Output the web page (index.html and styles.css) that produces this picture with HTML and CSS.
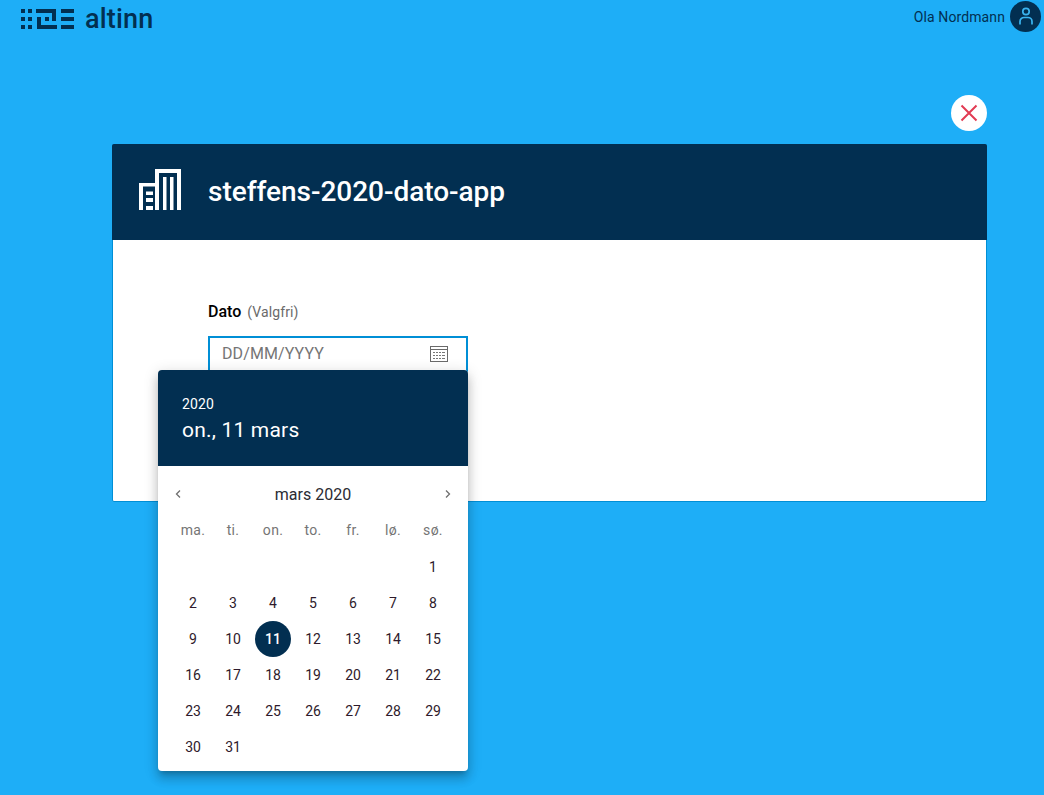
FILE: index.html
```html
<!DOCTYPE html>
<html lang="nb">
<head>
<meta charset="utf-8">
<title>steffens-2020-dato-app</title>
<link rel="stylesheet" href="styles.css">
</head>
<body>
<header class="topbar">
  <div class="brand">
    <svg class="brand-mark" width="53" height="20" viewBox="0 0 53 20" fill="#022f51" aria-hidden="true">
      <path d="M0 0h4v4H0zM7 0h4v4H7zM0 8h4v4H0zM7 8h4v4H7zM0 16h4v4H0zM7 16h4v4H7z"/>
      <path d="M15 0h20v12h-4V4H15z"/>
      <path d="M16 8h4v8h16v4H16z"/>
      <path d="M24 8h4v4h-4z"/>
      <path d="M40 0h13v4H40zM40 8h13v4H40zM40 16h13v4H40z"/>
    </svg>
    <span class="brand-name">altinn</span>
  </div>
  <div class="user">
    <span class="user-name">Ola Nordmann</span>
    <span class="avatar">
      <svg width="20" height="22" viewBox="0 0 20 22" fill="none" stroke="#3ab4f0" stroke-width="1.7" aria-hidden="true">
        <circle cx="10" cy="5.500" r="3.200"/>
        <path d="M4 18.500v-3a4 4 0 0 1 4-4h4a4 4 0 0 1 4 4v3"/>
      </svg>
    </span>
  </div>
</header>
<main class="stage">
  <div class="close-row">
    <button class="close" type="button" aria-label="Lukk">
      <svg width="18" height="18" viewBox="0 0 18 18" stroke="#e23b53" stroke-width="2" aria-hidden="true"><path d="M1.500 1.500l15 15M16.500 1.500l-15 15"/></svg>
    </button>
  </div>
  <section class="modal">
    <div class="modal-head">
      <svg class="org" width="42" height="41" viewBox="0 0 42 41" fill="#fff" aria-hidden="true">
        <path d="M16 41V0h26v41h-4V4H20v37z"/>
        <path d="M24 8h3.500v33H24zM31 8h3.500v33H31z"/>
        <path d="M0 41V14h16v3.500H4V41z"/>
        <path d="M7 22.500h7v3.500H7zM7 29h7v4H7zM7 37h7v4H7z"/>
      </svg>
      <h1 class="modal-title">steffens-2020-dato-app</h1>
    </div>
    <div class="modal-body">
      <div class="field-label"><strong>Dato</strong><span>(Valgfri)</span></div>
      <div class="date-input">
        <span>DD/MM/YYYY</span>
        <svg width="18" height="16" viewBox="0 0 18 16" aria-hidden="true">
          <rect x=".5" y=".5" width="17" height="15" fill="#fff" stroke="#6a6a6a"/>
          <path d="M1 3h16v1H1z" fill="#6a6a6a"/>
          <path d="M3 6h2v1H3zM6 6h2v1H6zM9 6h2v1H9zM12 6h3v1h-3zM3 9h2v1H3zM6 9h2v1H6zM9 9h2v1H9zM12 9h3v1h-3zM3 12h2v1H3zM6 12h2v1H6zM9 12h2v1H9zM12 12h3v1h-3z" fill="#777"/>
        </svg>
      </div>
    </div>
    <div class="picker">
      <div class="picker-head">
        <div class="picker-year">2020</div>
        <div class="picker-date">on., 11 mars</div>
      </div>
      <div class="month-nav">
        <svg width="6" height="10" viewBox="0 0 6 10" fill="none" stroke="#6f6f6f" stroke-width="1.3" aria-hidden="true"><path d="M5 1.500L1.500 5 5 8.500"/></svg>
        <span class="month">mars 2020</span>
        <svg width="6" height="10" viewBox="0 0 6 10" fill="none" stroke="#6f6f6f" stroke-width="1.3" aria-hidden="true"><path d="M1 1.500L4.500 5 1 8.500"/></svg>
      </div>
      <div class="weekdays">
        <span>ma.</span><span>ti.</span><span>on.</span><span>to.</span><span>fr.</span><span>lø.</span><span>sø.</span>
      </div>
      <div class="days">
        <span></span><span></span><span></span><span></span><span></span><span></span><span>1</span>
        <span>2</span><span>3</span><span>4</span><span>5</span><span>6</span><span>7</span><span>8</span>
        <span>9</span><span>10</span><span class="selected">11</span><span>12</span><span>13</span><span>14</span><span>15</span>
        <span>16</span><span>17</span><span>18</span><span>19</span><span>20</span><span>21</span><span>22</span>
        <span>23</span><span>24</span><span>25</span><span>26</span><span>27</span><span>28</span><span>29</span>
        <span>30</span><span>31</span>
      </div>
    </div>
  </section>
</main>
</body>
</html>
```
FILE: styles.css
```css
* { box-sizing: border-box; }
html, body { height: 100%; }
body {
  margin: 0;
  background: #1eaef7;
  color: #022f51;
  font-family: Roboto, "Liberation Sans", sans-serif;
  overflow: hidden;
}
.topbar {
  display: flex;
  justify-content: space-between;
  align-items: flex-start;
  height: 33px;
  padding: 1px 3px 0 21px;
}
.brand { display: flex; align-items: center; gap: 11px; height: 38px; margin-top: -1px; }
.brand-mark { display: block; }
.brand-name { font-size: 27px; font-weight: 500; line-height: 38px; letter-spacing: .2px; }
.user { display: flex; align-items: center; gap: 5px; }
.user-name { font-size: 14px; letter-spacing: .1px; }
.avatar {
  width: 31px; height: 31px; border-radius: 50%;
  background: #022f51;
  display: flex; align-items: center; justify-content: center;
}
.stage { padding: 62px 57px 0 112px; }
.close-row { display: flex; justify-content: flex-end; height: 49px; }
.close {
  width: 36px; height: 36px; border: 0; padding: 0; border-radius: 50%;
  background: #fff;
  display: flex; align-items: center; justify-content: center;
}
.modal {
  position: relative;
  width: 875px;
  height: 358px;
  background: #fff;
  border: 1px solid #008fd6;
  border-radius: 2px;
}
.modal-head {
  height: 96px;
  margin: -1px -1px 0;
  background: #022f51;
  display: flex; align-items: center; gap: 27px;
  padding-left: 27px;
  border-radius: 2px 2px 0 0;
}
.org { display: block; flex: none; margin-bottom: 5px; }
.modal-title { margin: 0; color: #fff; font-size: 28px; font-weight: 500; line-height: 1; letter-spacing: -.03px; }
.modal-body { padding: 62px 0 0 95px; }
.field-label { display: flex; align-items: baseline; gap: 6px; height: 20px; line-height: 20px; }
.field-label strong { font-weight: 500; font-size: 16px; color: #000; }
.field-label span { font-size: 14px; color: #6a6a6a; letter-spacing: .1px; }
.date-input {
  margin-top: 14px;
  width: 260px; height: 40px;
  border: 2px solid #008fd6;
  display: flex; align-items: center; justify-content: space-between;
  padding: 0 18px 0 12px;
  font-size: 16px; color: #757575;
  letter-spacing: .1px;
}
.date-input span { margin-top: -6px; }
.date-input svg { margin-top: -4px; }
.picker {
  position: absolute;
  left: 45px; top: 225px;
  width: 310px;
  height: 401px;
  background: #fff;
  border-radius: 4px;
  overflow: hidden;
  box-shadow: 0 5px 5px -3px rgba(0,0,0,.2), 0 8px 10px 1px rgba(0,0,0,.14), 0 3px 14px 2px rgba(0,0,0,.12);
}
.picker-head {
  height: 96px;
  background: #022f51;
  color: #fff;
  padding: 24px 24px 0;
}
.picker-year { font-size: 14px; line-height: 20px; letter-spacing: .1px; }
.picker-date { font-size: 21px; line-height: 28px; margin-top: 2px; letter-spacing: .2px; }
.month-nav {
  display: flex; align-items: center; justify-content: space-between;
  height: 24px; margin-top: 16px; padding: 0 17px;
}
.month { font-size: 16px; color: #2b2b33; }
.weekdays, .days {
  display: grid;
  grid-template-columns: repeat(7, 40px);
  padding: 0 15px;
}
.weekdays { margin-top: 12px; height: 24px; color: #757575; font-size: 14px; letter-spacing: .3px; }
.weekdays span { display: flex; align-items: center; justify-content: center; }
.days { margin-top: 7px; grid-auto-rows: 36px; font-size: 14px; color: #2e1a2b; }
.days span { display: flex; align-items: center; justify-content: center; }
.days .selected {
  width: 36px; height: 36px; margin-left: 2px;
  border-radius: 50%;
  background: #022f51; color: #fff; font-weight: 500;
}
```
